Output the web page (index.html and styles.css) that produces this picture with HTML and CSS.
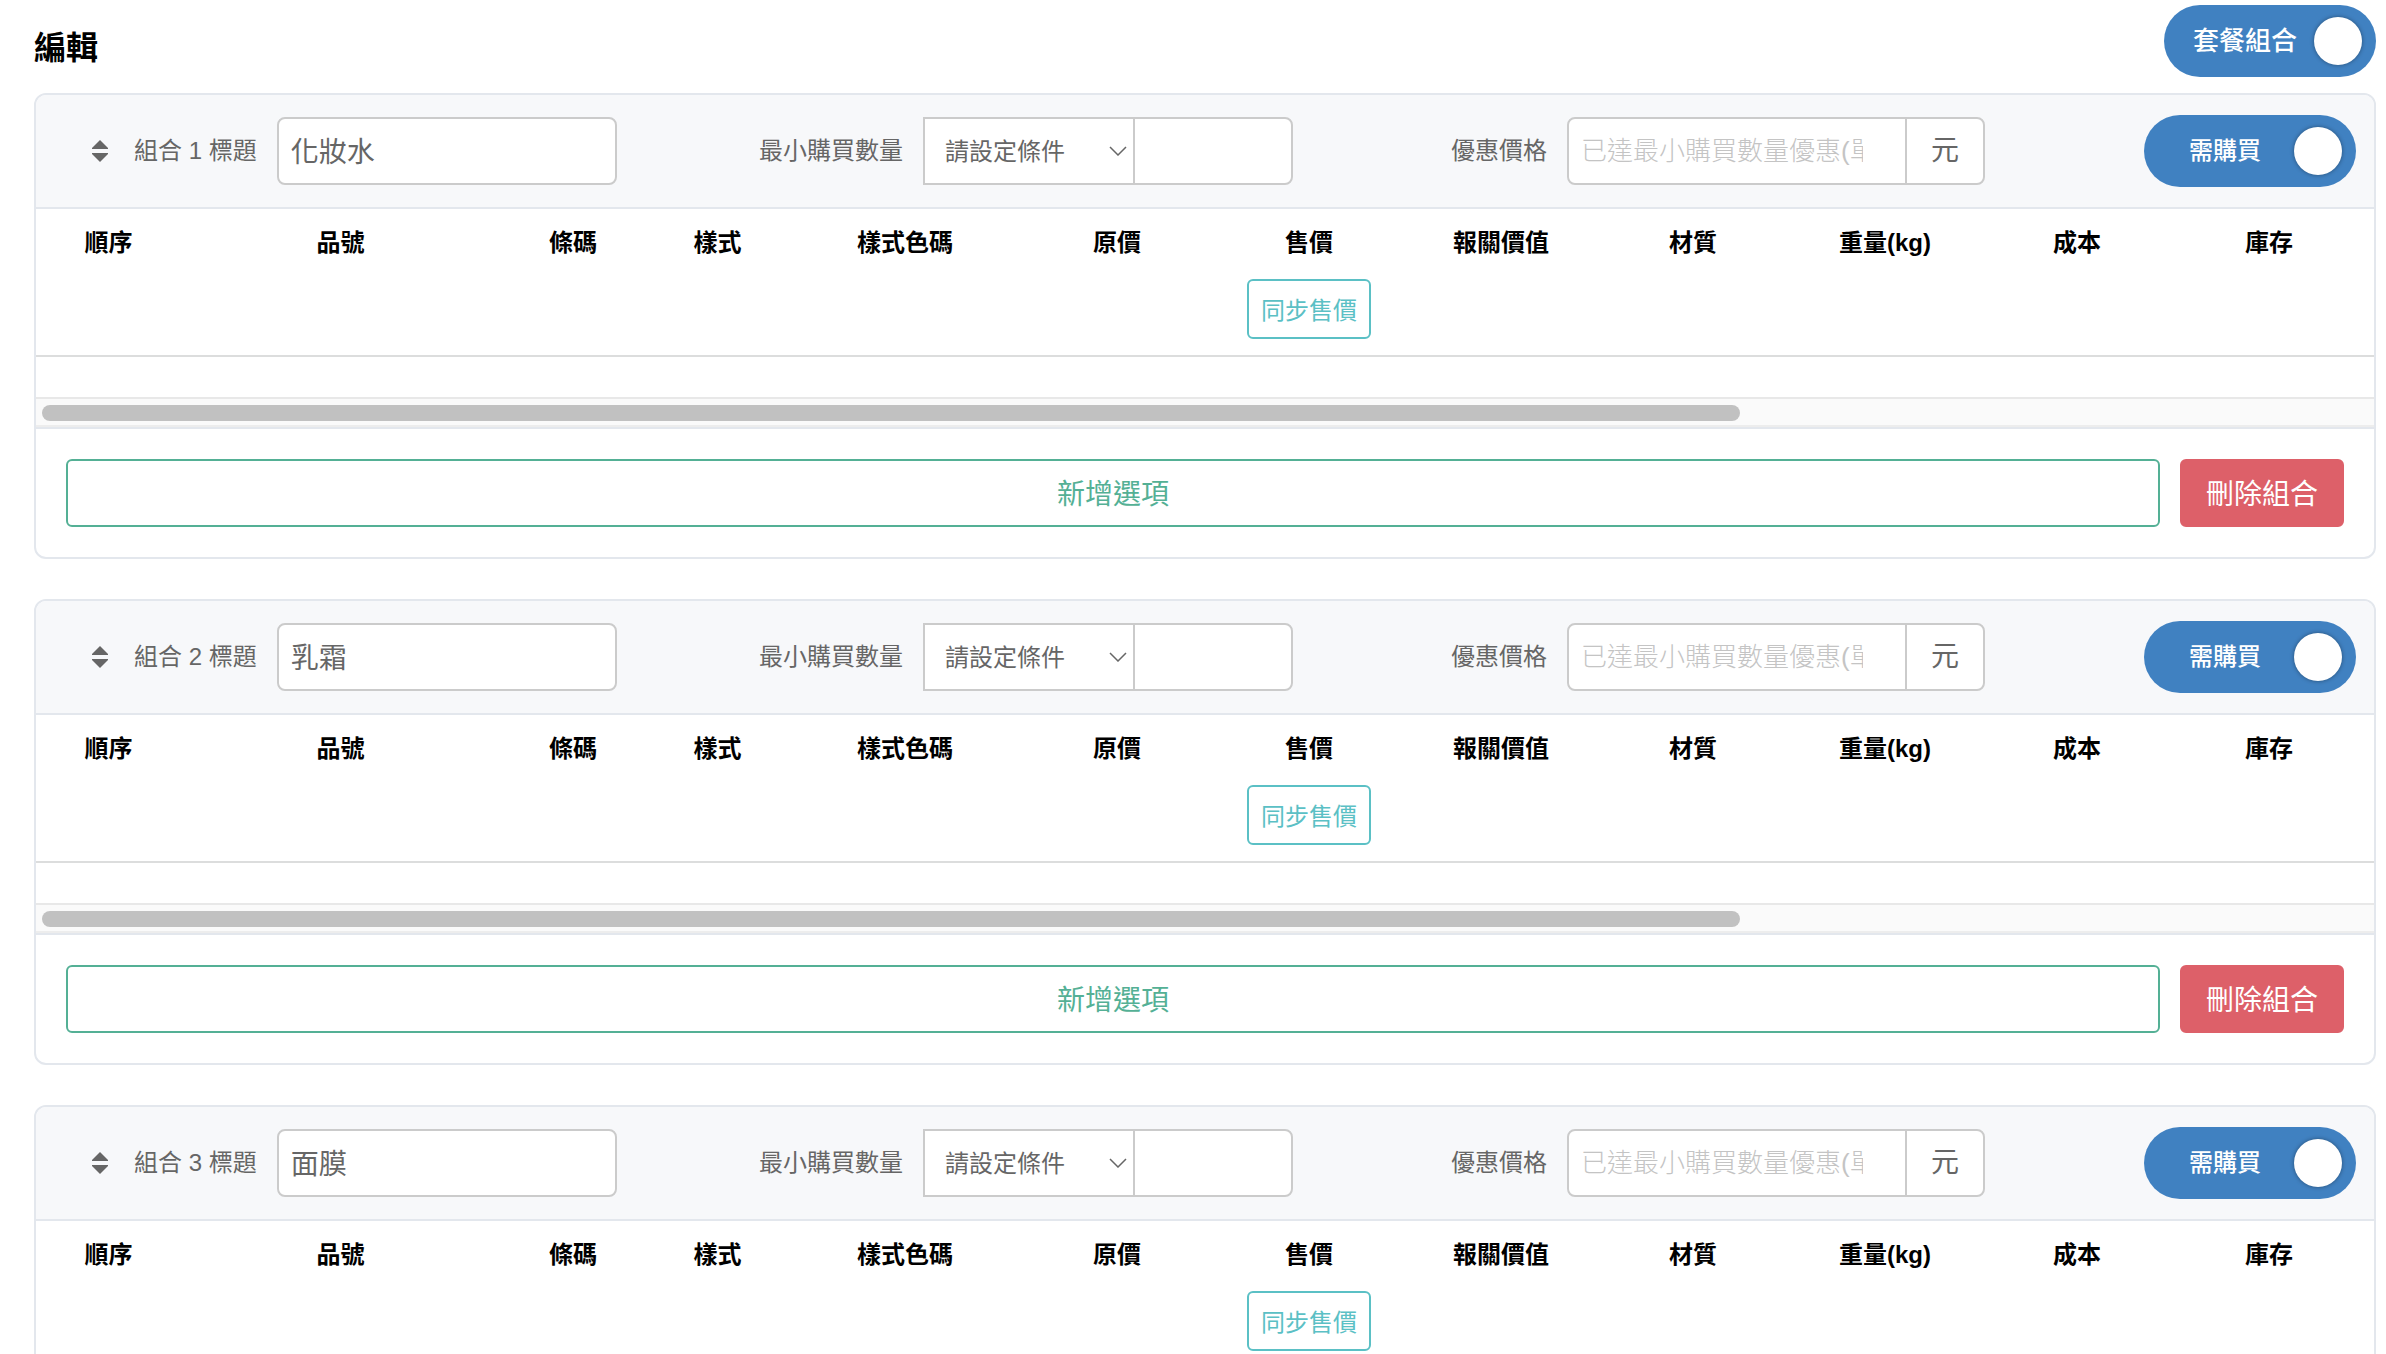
FILE: index.html
```html
<!DOCTYPE html>
<html lang="zh-Hant">
<head>
<meta charset="utf-8">
<meta name="viewport" content="width=device-width, initial-scale=1">
<title>編輯</title>
<link rel="stylesheet" href="styles.css">
</head>
<body>
<header class="page-head">
  <h1 class="page-title">編輯</h1>
  <label class="toggle toggle-large"><span class="toggle-text">套餐組合</span><input class="toggle-knob" type="checkbox" role="switch" checked></label>
</header>
<main class="groups">
  <section class="card">
    <div class="card-head">
      <div class="field">
        <svg class="sort" viewBox="0 0 16 22" aria-hidden="true"><path d="M8 0 16 8v1H0V8zM8 22l8-8v-1H0v1z"/></svg>
        <label for="title-1">組合 1 標題</label>
        <input class="box title-input" id="title-1" type="text" value="化妝水">
      </div>
      <div class="field">
        <label for="rule-1">最小購買數量</label>
        <div class="join">
          <div class="select-wrap">
            <select class="box rule" id="rule-1"><option>請設定條件</option></select>
            <svg class="chevron" viewBox="0 0 18 10" aria-hidden="true"><path d="M1 1l8 8 8-8"/></svg>
          </div>
          <input class="box qty" type="text" aria-label="數量">
        </div>
      </div>
      <div class="field">
        <label for="price-1">優惠價格</label>
        <div class="join">
          <input class="box price" id="price-1" type="text" placeholder="已達最小購買數量優惠(單價)">
          <span class="box unit">元</span>
        </div>
      </div>
      <label class="toggle"><span class="toggle-text">需購買</span><input class="toggle-knob" type="checkbox" role="switch" checked></label>
    </div>
    <div class="table-wrap">
      <table class="items">
        <colgroup><col class="c-order"><col class="c-sku"><col class="c-barcode"><col class="c-style"><col class="c-color"><col class="c-num" span="7"><col></colgroup>
        <thead><tr>
          <th>順序</th><th>品號</th><th>條碼</th><th>樣式</th><th>樣式色碼</th><th>原價</th>
          <th>售價<button class="sync" type="button">同步售價</button></th>
          <th>報關價值</th><th>材質</th><th>重量(kg)</th><th>成本</th><th>庫存</th><td></td>
        </tr></thead>
        <tbody><tr><td class="empty" colspan="13"></td></tr></tbody>
      </table>
    </div>
    <div class="scroll-track"><div class="scroll-thumb"></div></div>
    <div class="card-foot">
      <button class="btn btn-add" type="button">新增選項</button>
      <button class="btn btn-delete" type="button">刪除組合</button>
    </div>
  </section>

  <section class="card">
    <div class="card-head">
      <div class="field">
        <svg class="sort" viewBox="0 0 16 22" aria-hidden="true"><path d="M8 0 16 8v1H0V8zM8 22l8-8v-1H0v1z"/></svg>
        <label for="title-2">組合 2 標題</label>
        <input class="box title-input" id="title-2" type="text" value="乳霜">
      </div>
      <div class="field">
        <label for="rule-2">最小購買數量</label>
        <div class="join">
          <div class="select-wrap">
            <select class="box rule" id="rule-2"><option>請設定條件</option></select>
            <svg class="chevron" viewBox="0 0 18 10" aria-hidden="true"><path d="M1 1l8 8 8-8"/></svg>
          </div>
          <input class="box qty" type="text" aria-label="數量">
        </div>
      </div>
      <div class="field">
        <label for="price-2">優惠價格</label>
        <div class="join">
          <input class="box price" id="price-2" type="text" placeholder="已達最小購買數量優惠(單價)">
          <span class="box unit">元</span>
        </div>
      </div>
      <label class="toggle"><span class="toggle-text">需購買</span><input class="toggle-knob" type="checkbox" role="switch" checked></label>
    </div>
    <div class="table-wrap">
      <table class="items">
        <colgroup><col class="c-order"><col class="c-sku"><col class="c-barcode"><col class="c-style"><col class="c-color"><col class="c-num" span="7"><col></colgroup>
        <thead><tr>
          <th>順序</th><th>品號</th><th>條碼</th><th>樣式</th><th>樣式色碼</th><th>原價</th>
          <th>售價<button class="sync" type="button">同步售價</button></th>
          <th>報關價值</th><th>材質</th><th>重量(kg)</th><th>成本</th><th>庫存</th><td></td>
        </tr></thead>
        <tbody><tr><td class="empty" colspan="13"></td></tr></tbody>
      </table>
    </div>
    <div class="scroll-track"><div class="scroll-thumb"></div></div>
    <div class="card-foot">
      <button class="btn btn-add" type="button">新增選項</button>
      <button class="btn btn-delete" type="button">刪除組合</button>
    </div>
  </section>

  <section class="card">
    <div class="card-head">
      <div class="field">
        <svg class="sort" viewBox="0 0 16 22" aria-hidden="true"><path d="M8 0 16 8v1H0V8zM8 22l8-8v-1H0v1z"/></svg>
        <label for="title-3">組合 3 標題</label>
        <input class="box title-input" id="title-3" type="text" value="面膜">
      </div>
      <div class="field">
        <label for="rule-3">最小購買數量</label>
        <div class="join">
          <div class="select-wrap">
            <select class="box rule" id="rule-3"><option>請設定條件</option></select>
            <svg class="chevron" viewBox="0 0 18 10" aria-hidden="true"><path d="M1 1l8 8 8-8"/></svg>
          </div>
          <input class="box qty" type="text" aria-label="數量">
        </div>
      </div>
      <div class="field">
        <label for="price-3">優惠價格</label>
        <div class="join">
          <input class="box price" id="price-3" type="text" placeholder="已達最小購買數量優惠(單價)">
          <span class="box unit">元</span>
        </div>
      </div>
      <label class="toggle"><span class="toggle-text">需購買</span><input class="toggle-knob" type="checkbox" role="switch" checked></label>
    </div>
    <div class="table-wrap">
      <table class="items">
        <colgroup><col class="c-order"><col class="c-sku"><col class="c-barcode"><col class="c-style"><col class="c-color"><col class="c-num" span="7"><col></colgroup>
        <thead><tr>
          <th>順序</th><th>品號</th><th>條碼</th><th>樣式</th><th>樣式色碼</th><th>原價</th>
          <th>售價<button class="sync" type="button">同步售價</button></th>
          <th>報關價值</th><th>材質</th><th>重量(kg)</th><th>成本</th><th>庫存</th><td></td>
        </tr></thead>
        <tbody><tr><td class="empty" colspan="13"></td></tr></tbody>
      </table>
    </div>
    <div class="scroll-track"><div class="scroll-thumb"></div></div>
    <div class="card-foot">
      <button class="btn btn-add" type="button">新增選項</button>
      <button class="btn btn-delete" type="button">刪除組合</button>
    </div>
  </section>
</main>
</body>
</html>
```
FILE: styles.css
```css
:root {
  --line: #e3e7ed;
  --control-line: #cbcbcb;
  --text: #666;
  --blue: #4081c1;
  --green: #54b095;
  --teal: #5bc0c5;
  --red: #dd6069;
}

* {
  box-sizing: border-box;
}

body {
  margin: 0;
  padding: 5px 10px 40px 34px;
  background: #fff;
  color: #000;
  font: 24px/36px "Liberation Sans", "Noto Sans CJK TC", sans-serif;
}

button,
input,
select {
  margin: 0;
  font-family: inherit;
}

button {
  cursor: pointer;
}

.page-head {
  display: flex;
  justify-content: space-between;
  align-items: center;
  margin-bottom: 16px;
}

.page-title {
  margin: 14px 0 0;
  font-size: 32px;
  line-height: 48px;
}

.groups {
  display: flex;
  flex-direction: column;
  gap: 40px;
}

.card {
  border: 2px solid var(--line);
  border-radius: 12px;
  overflow: hidden;
}

.card-head {
  display: grid;
  grid-template-columns: 667fr 692fr 693fr 212px;
  align-items: center;
  padding: 20px 18px 20px 56px;
  border-bottom: 2px solid var(--line);
  background: #f7f8fa;
  color: var(--text);
}

.field {
  display: flex;
  align-items: center;
  gap: 20px;
  white-space: nowrap;
}

.sort {
  width: 16px;
  height: 22px;
  margin-right: 6px;
  fill: var(--text);
}

.box {
  height: 68px;
  padding: 0 12px;
  border: 2px solid var(--control-line);
  border-radius: 8px;
  background: #fff;
  color: var(--text);
  font-size: 28px;
}

.title-input {
  width: 340px;
  padding-bottom: 2px;
}

.join {
  display: flex;
}

.select-wrap {
  display: grid;
  align-items: center;
}

.select-wrap > * {
  grid-area: 1 / 1;
}

.rule {
  width: 212px;
  padding: 0 20px;
  border-radius: 0;
  font-size: 24px;
  appearance: none;
}

.chevron {
  justify-self: end;
  width: 18px;
  height: 10px;
  margin-right: 8px;
  fill: none;
  stroke: var(--text);
  stroke-width: 1.5;
  pointer-events: none;
}

.qty {
  width: 160px;
  margin-left: -2px;
  border-radius: 0 8px 8px 0;
}

.price {
  width: 340px;
  padding: 0 42px 0 12px;
  border-radius: 8px 0 0 8px;
  font-size: 26px;
}

.price::placeholder {
  color: #c4c4c4;
  font-weight: 300;
  opacity: 1;
}

.unit {
  display: flex;
  align-items: center;
  justify-content: center;
  width: 80px;
  margin-left: -2px;
  border-radius: 0 8px 8px 0;
}

.toggle {
  display: flex;
  align-items: center;
  width: 212px;
  height: 72px;
  padding: 0 14px 0 12px;
  border-radius: 36px;
  background: var(--blue);
  color: #fff;
  font-weight: 500;
  cursor: pointer;
}

.toggle-large {
  font-size: 26px;
}

.toggle-text {
  flex: 1;
  text-align: center;
}

.toggle-knob {
  width: 48px;
  height: 48px;
  border-radius: 50%;
  background: #fff;
  box-shadow: 0 0 4px rgba(0, 0, 0, 0.4);
  appearance: none;
}

.table-wrap {
  overflow: hidden;
}

.items {
  width: 100%;
  min-width: 2329px;
  border-collapse: separate;
  border-spacing: 0;
  table-layout: fixed;
}

.c-order { width: 145px; }
.c-sku { width: 319px; }
.c-barcode { width: 146px; }
.c-style { width: 143px; }
.c-color { width: 232px; }
.c-num { width: 192px; }

.items th,
.items thead td {
  padding: 16px 0;
  border-bottom: 2px solid #dcdddd;
  vertical-align: top;
}

.items .empty {
  height: 40px;
  padding: 0;
}

.sync {
  display: block;
  width: 124px;
  height: 60px;
  margin: 18px auto 0;
  padding: 0 0 2px;
  border: 2px solid var(--teal);
  border-radius: 6px;
  background: #fff;
  color: var(--teal);
  font-size: 24px;
}

.scroll-track {
  padding: 6px 6px 4px;
  border-top: 2px solid #e8e8e8;
  border-bottom: 2px solid #ededed;
  background: #fafafa;
}

.scroll-thumb {
  width: 73%;
  height: 16px;
  border-radius: 8px;
  background: #c1c1c1;
}

.card-foot {
  display: flex;
  gap: 20px;
  padding: 30px;
  border-top: 2px solid var(--line);
}

.btn {
  height: 68px;
  padding: 0 0 2px;
  border: 2px solid;
  border-radius: 6px;
  font-size: 28px;
}

.btn-add {
  flex: 1;
  border-color: var(--green);
  background: #fff;
  color: var(--green);
}

.btn-delete {
  width: 164px;
  border-color: var(--red);
  background: var(--red);
  color: #fff;
}
```
